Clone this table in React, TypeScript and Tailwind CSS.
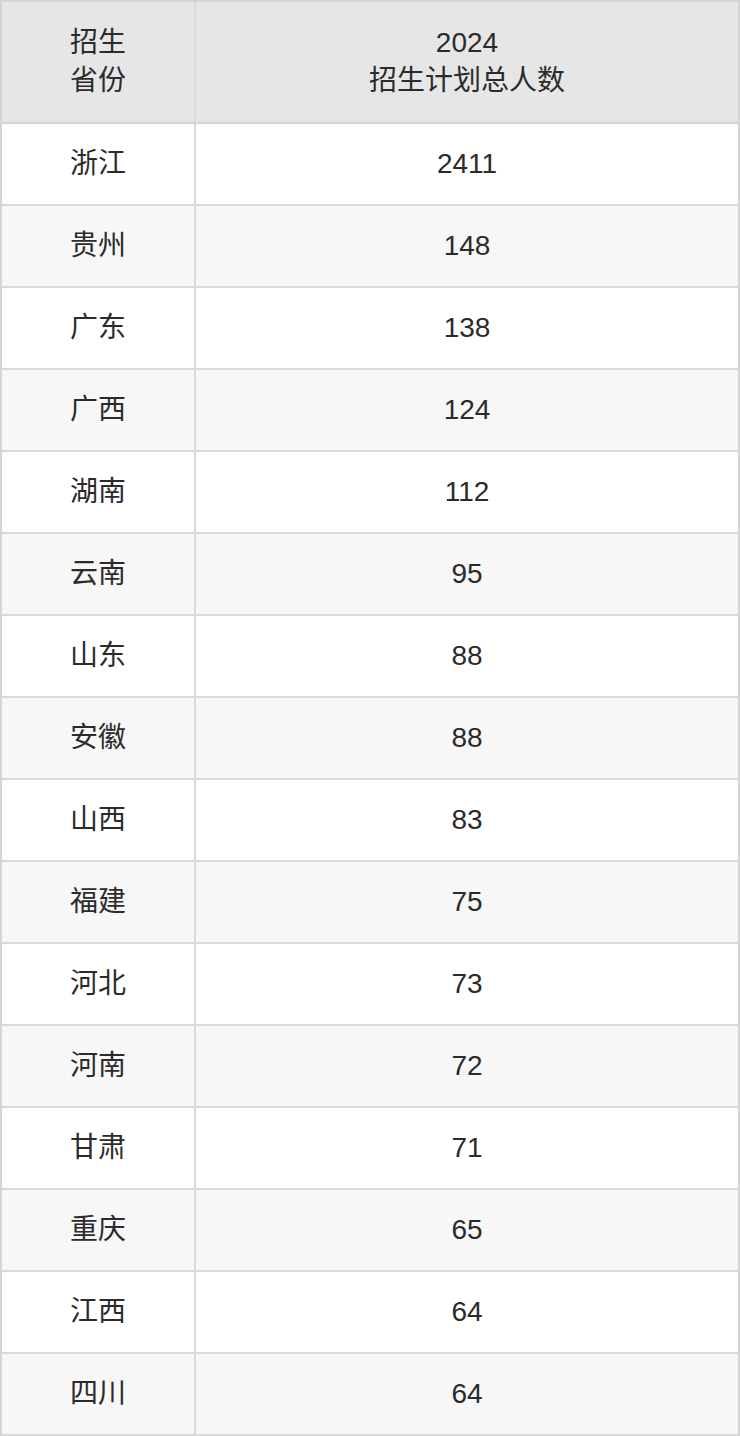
const rows: [string, string][] = [
  ["浙江", "2411"],
  ["贵州", "148"],
  ["广东", "138"],
  ["广西", "124"],
  ["湖南", "112"],
  ["云南", "95"],
  ["山东", "88"],
  ["安徽", "88"],
  ["山西", "83"],
  ["福建", "75"],
  ["河北", "73"],
  ["河南", "72"],
  ["甘肃", "71"],
  ["重庆", "65"],
  ["江西", "64"],
  ["四川", "64"],
]

export default function App() {
  return (
    <div
      className="w-[740px] bg-white text-[28px] leading-[38px] text-[#2b2b2b]"
      style={{ fontFamily: '"Liberation Sans", "Noto Sans CJK SC", sans-serif' }}
    >
      <div className="border-x-2 border-t-2 border-[#d4d4d4]">
        <div className="flex border-b-2 border-[#d4d4d4] bg-[#e6e6e6]">
          <div className="flex h-[120px] w-[194px] flex-col items-center justify-center border-r-2 border-[#d9d9d9]">
            <span>招生</span>
            <span>省份</span>
          </div>
          <div className="flex h-[120px] flex-1 flex-col items-center justify-center">
            <span>2024</span>
            <span>招生计划总人数</span>
          </div>
        </div>
        {rows.map(([province, total], i) => (
          <div
            key={province}
            className={
              "flex border-b-2 border-[#d9d9d9] " +
              (i % 2 === 1 ? "bg-[#f7f7f7]" : "bg-white")
            }
          >
            <div className="flex h-[80px] w-[194px] items-center justify-center border-r-2 border-[#d9d9d9]">
              {province}
            </div>
            <div className="flex h-[80px] flex-1 items-center justify-center">
              {total}
            </div>
          </div>
        ))}
      </div>
    </div>
  )
}
